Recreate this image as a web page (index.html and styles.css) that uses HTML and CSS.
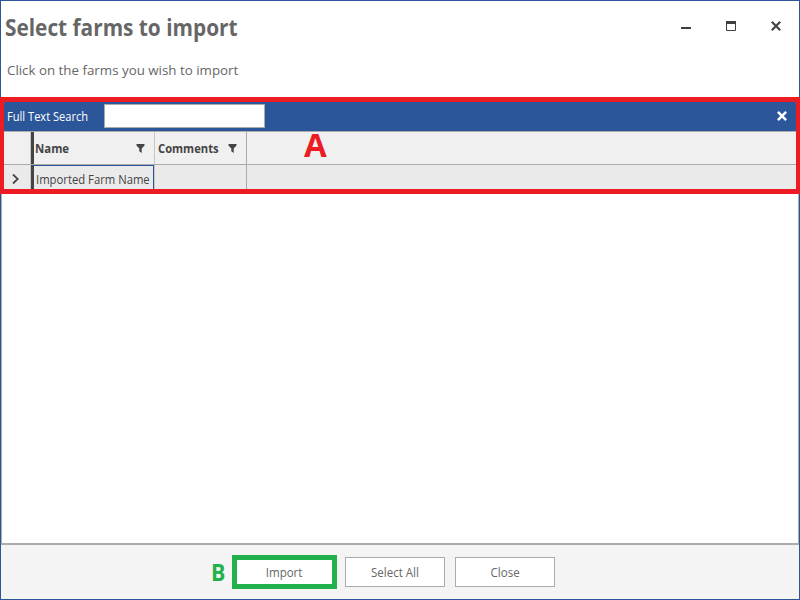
FILE: index.html
```html
<!DOCTYPE html>
<html lang="en">
<head>
<meta charset="utf-8">
<title>Select farms to import</title>
<link rel="stylesheet" href="styles.css">
</head>
<body>
<div class="window">
  <header class="titlebar">
    <div class="heading">
      <h1><span class="t-title">Select farms to import</span></h1>
      <p><span class="t-sub">Click on the farms you wish to import</span></p>
    </div>
    <div class="controls">
      <svg width="10" height="12" viewBox="0 0 10 12"><path d="M0 8h10" stroke="#3f3f3f" stroke-width="2"/></svg>
      <svg width="10" height="12" viewBox="0 0 10 12"><path d="M.5 2v8.500h9V2" fill="none" stroke="#3f3f3f"/><path d="M0 2.500h10" stroke="#3f3f3f" stroke-width="3"/></svg>
      <svg width="10" height="12" viewBox="0 0 10 12"><path d="M.8 1.800l8.400 8.400M9.200 1.800L.8 10.200" stroke="#444" stroke-width="2.200"/></svg>
    </div>
  </header>
  <main class="content">
    <section class="grid-panel">
      <div class="search">
        <label for="q"><span class="t-search">Full Text Search</span></label>
        <input id="q" type="text">
        <svg class="search-close" width="10" height="10" viewBox="0 0 10 10"><path d="M.9.9l8.200 8.200M9.100.9L.9 9.100" stroke="#fff" stroke-width="2.500"/></svg>
      </div>
      <div class="row head">
        <div class="marker"></div>
        <div class="cell name"><span class="t-name">Name</span><svg width="9" height="9" viewBox="0 0 9 9"><path d="M.5 0h8v1.500L5.700 4.500V9L3.300 7.300V4.500L.5 1.500z" fill="#444"/></svg></div>
        <div class="cell comments"><span class="t-comments">Comments</span><svg width="9" height="9" viewBox="0 0 9 9"><path d="M.5 0h8v1.500L5.700 4.500V9L3.300 7.300V4.500L.5 1.500z" fill="#444"/></svg></div>
        <div class="rest"></div>
      </div>
      <div class="row data">
        <div class="marker"><svg width="7" height="10" viewBox="0 0 7 10"><path d="M1 .5L5.800 5 1 9.500" fill="none" stroke="#444" stroke-width="1.800"/></svg></div>
        <div class="cell name"><span class="t-farm">Imported Farm Name</span></div>
        <div class="cell comments"></div>
        <div class="rest"></div>
      </div>
      <b class="label-a">A</b>
    </section>
    <div class="list"></div>
  </main>
  <footer class="actions">
    <b class="label-b"><span>B</span></b>
    <button class="primary"><span>Import</span></button>
    <button><span>Select All</span></button>
    <button><span>Close</span></button>
  </footer>
</div>
</body>
</html>
```
FILE: styles.css
```css
* { box-sizing: border-box; }
body { margin: 0; font-family: "Open Sans", "Noto Sans", sans-serif; font-size: 12px; color: #444; background: #fff; }
svg { display: block; flex: none; }
span { display: inline-block; white-space: nowrap; transform-origin: 0 50%; }
.window { width: 800px; height: 600px; border: 1px solid #2b579a; display: flex; flex-direction: column; }
.titlebar { height: 96px; flex: none; display: flex; justify-content: space-between; }
.heading { padding: 10px 0 0 4px; color: #666; }
h1 { margin: 0; font-size: 23px; line-height: 32px; font-weight: 700; }
p { margin: 16px 0 0 2px; font-size: 13.5px; line-height: 22px; }
.t-title { transform: scaleX(.905); }
.t-sub { transform: scaleX(.987); }
.t-search { transform: scaleX(.925); }
.t-name { transform: scaleX(.95); }
.t-comments { transform: scaleX(.935); }
.t-farm { transform: scaleX(.94); }
.controls { display: flex; gap: 35px; padding: 19px 18px 0 0; }
.content { flex: 1; display: flex; flex-direction: column; min-height: 0; }
.grid-panel { position: relative; height: 97px; flex: none; margin: 0 -1px; border: 5px solid #ed1c24; border-width: 5px 4px; display: flex; flex-direction: column; }
.search { height: 29px; flex: none; background: #2b579a; color: #fff; display: flex; align-items: center; padding: 0 9px 0 3px; }
.search label { width: 97px; }
.search input { width: 161px; height: 24px; margin: 0 0 1px; padding: 0 4px; border: 1px solid #ababab; background: #fff; outline: 0; }
.search-close { margin: 0 0 1px auto; }
.row { display: flex; border-top: 1px solid #ababab; }
.head { height: 33px; background: #f0f0f0; font-weight: 700; }
.data { height: 25px; background: #eaeaea; }
.marker { width: 30px; border-right: 3px solid #444; padding-left: 8px; display: flex; align-items: center; box-shadow: inset -1px 0 #c8c8c8; }
.data .marker { padding-top: 4px; }
.cell { display: flex; align-items: center; justify-content: space-between; border-right: 1px solid #ababab; }
.cell.name { width: 121px; }
.head .name { padding: 0 9px 0 1px; border-right-color: #c8c8c8; }
.cell.comments { width: 92px; padding: 0 9px 0 3px; }
.data .name { position: relative; padding: 5px 0 0 2px; border-right-color: #c8c8c8; }
.data .name::before { content: ""; position: absolute; inset: 0; border: solid #2b579a; border-width: 1px 1px 0 0; }
.rest { flex: 1; }
.label-a { position: absolute; left: 300px; top: 21px; font-size: 33px; line-height: 44px; color: #ed1c24; }
.list { flex: 1; border: 1px solid #ababab; border-width: 0 1px 2px; }
.actions { height: 54px; flex: none; background: #f4f4f4; display: flex; align-items: center; padding-left: 210px; }
.label-b { width: 21px; font-size: 23px; line-height: 30px; color: #22b14c; }
.label-b span { transform: scaleX(.93); }
button { width: 100px; height: 30px; margin: 0 10px 0 0; padding: 0; border: 1px solid #ababab; background: #fff; color: #666; font: inherit; }
button span { transform: scaleX(.96); transform-origin: 50% 50%; }
button.primary { width: 105px; height: 34px; margin-right: 8px; border: 5px solid #22b14c; }
```
